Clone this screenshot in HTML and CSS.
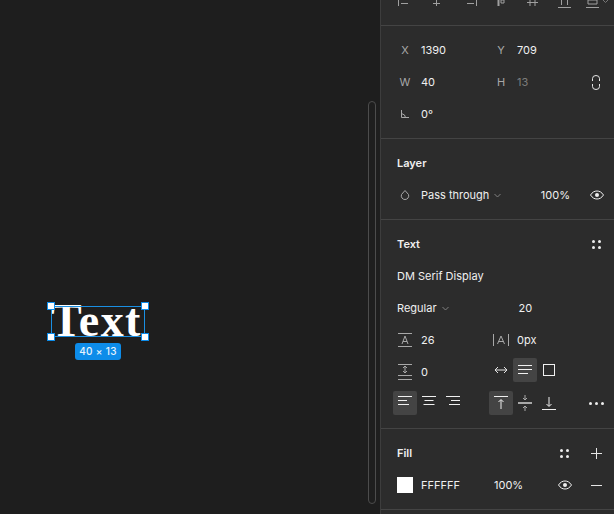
FILE: index.html
```html
<!DOCTYPE html>
<html lang="en">
<head>
    <meta charset="UTF-8">
    <title>Text properties</title>
    <link rel="stylesheet" href="styles.css">
</head>
<body>

<div class="app">
    <div class="canvas">
        <div class="layer-text">Text</div>
        <div class="selection">
            <span class="handle tl"></span>
            <span class="handle tr"></span>
            <span class="handle bl"></span>
            <span class="handle br"></span>
        </div>
        <div class="size-badge">40 × 13</div>
        <div class="scrollbar"></div>
    </div>

    <div class="panel">
        <!-- align buttons, cut off by the top of the window -->
        <div class="section align-section">
            <svg width="233" height="25" viewBox="0 0 233 25" fill="none" stroke="#a0a0a0">
                <path d="M17.5 0v6M20 3.5h7"/>
                <path d="M55.5 0v6M52 3.500h7"/>
                <path d="M95.5 0v6M86 3.500h7"/>
                <path d="M117.5 0v6" stroke-width="2"/>
                <path d="M120 0h3v3h-3z"/>
                <path d="M146 2.500h11M149 0v6M154 0v6"/>
                <path d="M177 7.500h13M180.500 0v5M186.500 0v5"/>
                <path d="M205 7.500h13M207 0h9v4h-9z"/>
                <path d="M222 0l2.500 2.500L227 0" stroke="#777"/>
            </svg>
        </div>

        <div class="section xy-section">
            <div class="row">
                <span class="label">X</span><span class="value">1390</span>
                <span class="label">Y</span><span class="value">709</span>
            </div>
            <div class="row">
                <span class="label">W</span><span class="value">40</span>
                <span class="label">H</span><span class="value dim">13</span>
                <svg class="constrain" width="8" height="15" viewBox="0 0 8 15" fill="none" stroke="#e6e6e6">
                    <path d="M.5 6V3.500a3.500 3 0 0 1 7 0V6M.5 9v2.500a3.500 3 0 0 0 7 0V9"/>
                </svg>
            </div>
            <div class="row">
                <span class="label">
                    <svg width="10" height="10" viewBox="0 0 10 10" fill="none" stroke="#a8a8a8">
                        <path d="M1.500 1v7.500H9M1.500 4.500l3 1.500 1 2.500"/>
                    </svg>
                </span>
                <span class="value">0°</span>
            </div>
        </div>

        <div class="section layer-section">
            <div class="heading">Layer</div>
            <div class="row">
                <span class="label">
                    <svg width="10" height="12" viewBox="0 0 10 12" fill="none" stroke="#a8a8a8">
                        <path d="M5 1.500L8.500 5.500a3.700 3.700 0 0 1-3.500 5a3.700 3.700 0 0 1-3.500-5z"/>
                    </svg>
                </span>
                <span class="blend">Pass through</span>
                <svg class="chevron" width="7" height="5" viewBox="0 0 7 5" fill="none" stroke="#808080"><path d="M.5 1L3.500 4L6.500 1"/></svg>
                <span class="percent">100%</span>
                <svg class="eye" width="14" height="10" viewBox="0 0 14 10" fill="none" stroke="#eee"><path d="M.5 5C2.500 2 4.500 1 7 1s4.500 1 6.500 4C11.500 8 9.500 9 7 9S2.500 8 .5 5z"/><circle cx="7" cy="5" r="2" fill="#eee" stroke="none"/></svg>
            </div>
        </div>

        <div class="section text-section">
            <div class="heading">
                Text
                <span class="dots"><i></i><i></i><i></i><i></i></span>
            </div>
            <div class="row">DM Serif Display</div>
            <div class="row">
                <span>Regular</span>
                <svg class="chevron" width="7" height="5" viewBox="0 0 7 5" fill="none" stroke="#808080"><path d="M.5 1L3.500 4L6.500 1"/></svg>
                <span class="font-size">20</span>
            </div>
            <div class="row">
                <span class="label">
                    <svg width="15" height="14" viewBox="0 0 15 14" fill="none" stroke="#a8a8a8">
                        <path d="M0 .5h14M0 13.500h14M4 11l3-8 3 8M5 8.500h4"/>
                    </svg>
                </span>
                <span class="value">26</span>
                <span class="label">
                    <svg width="16" height="12" viewBox="0 0 16 12" fill="none" stroke="#a8a8a8">
                        <path d="M.5 0v12M15.500 0v12M4.500 10l3.500-8 3.500 8M5.500 7.500h5"/>
                    </svg>
                </span>
                <span class="value">0px</span>
            </div>
            <div class="row">
                <span class="label">
                    <svg width="15" height="16" viewBox="0 0 15 16" fill="none" stroke="#a8a8a8">
                        <path d="M0 .5h14M0 11.500h14M0 15.500h14M7 2v7M5 4l2-2 2 2M5 7l2 2 2-2"/>
                    </svg>
                </span>
                <span class="value">0</span>
                <span class="resize-opts">
                    <svg width="14" height="8" viewBox="0 0 14 8" fill="none" stroke="#e6e6e6"><path d="M1 4h12M4 1L1 4l3 3M10 1l3 3-3 3"/></svg>
                    <span class="tool active">
                        <svg width="14" height="10" viewBox="0 0 14 10" fill="none" stroke="#f0f0f0"><path d="M0 .5h14M0 4.500h14M0 8.500h10"/></svg>
                    </span>
                    <span class="square"></span>
                </span>
            </div>
            <div class="row tools-row">
                <span class="tool active raised">
                    <svg width="14" height="10" viewBox="0 0 14 10" fill="none" stroke="#f0f0f0"><path d="M0 .5h14M0 4.500h9M0 8.500h11"/></svg>
                </span>
                <span class="tool raised">
                    <svg width="14" height="10" viewBox="0 0 14 10" fill="none" stroke="#f0f0f0"><path d="M0 .5h14M2.500 4.500h9M1.500 8.500h11"/></svg>
                </span>
                <span class="tool raised">
                    <svg width="14" height="10" viewBox="0 0 14 10" fill="none" stroke="#f0f0f0"><path d="M0 .5h14M5 4.500h9M3 8.500h11"/></svg>
                </span>
                <span class="tool active gap-left">
                    <svg width="14" height="14" viewBox="0 0 14 14" fill="none" stroke="#f0f0f0"><path d="M0 .5h14M7 13V4M4.500 6L7 3.500 9.500 6"/></svg>
                </span>
                <span class="tool">
                    <svg width="14" height="16" viewBox="0 0 14 16" fill="none" stroke="#a8a8a8"><path d="M0 8h14" stroke-width="2"/><path d="M7 0v5M5 3l2 2 2-2M7 16v-5M5 13l2-2 2 2"/></svg>
                </span>
                <span class="tool">
                    <svg width="14" height="14" viewBox="0 0 14 14" fill="none" stroke="#f0f0f0"><path d="M0 13.500h14M7 1v9M4.500 8L7 10.500 9.500 8"/></svg>
                </span>
                <span class="more"><i></i><i></i><i></i></span>
            </div>
        </div>

        <div class="section fill-section">
            <div class="heading">
                Fill
                <span class="dots"><i></i><i></i><i></i><i></i></span>
                <svg class="plus" width="11" height="11" viewBox="0 0 11 11" stroke="#e6e6e6"><path d="M5.500 0v11M0 5.500h11"/></svg>
            </div>
            <div class="row">
                <span class="swatch"></span>
                <span class="hex">FFFFFF</span>
                <span class="fill-percent">100%</span>
                <svg class="eye" width="14" height="10" viewBox="0 0 14 10" fill="none" stroke="#eee"><path d="M.5 5C2.500 2 4.500 1 7 1s4.500 1 6.500 4C11.500 8 9.500 9 7 9S2.500 8 .5 5z"/><circle cx="7" cy="5" r="2" fill="#eee" stroke="none"/></svg>
                <svg class="minus" width="11" height="1" viewBox="0 0 11 1" stroke="#e6e6e6"><path d="M0 .5h11"/></svg>
            </div>
        </div>
    </div>
</div>

</body>
</html>
```

FILE: styles.css
```css
* {
    margin: 0;
    padding: 0;
    box-sizing: border-box;
}

html, body {
    height: 100%;
    overflow: hidden;
}

body {
    background: #1e1e1e;
    color: #f0f0f0;
    font-family: Inter, 'Liberation Sans', sans-serif;
    font-size: 11px;
}

.app {
    display: flex;
    width: 614px;
    height: 514px;
}

/* Canvas: things here sit at free positions */
.canvas {
    position: relative;
    width: 380px;
    flex-shrink: 0;
}

.layer-text {
    position: absolute;
    left: 51px;
    top: 294px;
    font-family: 'Liberation Serif', serif;
    font-weight: bold;
    font-size: 46px;
    line-height: 54px;
    letter-spacing: 1.4px;
    color: #fff;
}

.selection {
    position: absolute;
    left: 51px;
    top: 306px;
    width: 94px;
    height: 31px;
    border: 1px solid #1a8fe3;
}

.handle {
    position: absolute;
    width: 8px;
    height: 8px;
    background: #fff;
    border: 1px solid #0d8ce9;
}

.handle.tl { left: -5px; top: -5px; }
.handle.tr { right: -5px; top: -5px; }
.handle.bl { left: -5px; bottom: -5px; }
.handle.br { right: -5px; bottom: -5px; }

.size-badge {
    position: absolute;
    left: 75px;
    top: 343px;
    width: 46px;
    height: 17px;
    line-height: 17px;
    text-align: center;
    background: #0d8ce9;
    color: #e8f4fd;
    border-radius: 3px;
    font-size: 10px;
    font-weight: 500;
    letter-spacing: 0.3px;
}

.scrollbar {
    position: absolute;
    left: 368px;
    top: 101px;
    width: 8px;
    height: 403px;
    border: 1px solid #4c4c4c;
    border-radius: 4px;
}

/* Right panel */
.panel {
    width: 234px;
    height: 514px;
    background: #2c2c2c;
    border-left: 1px solid #3d3d3d;
    overflow: hidden;
}

.section {
    border-bottom: 1px solid #444;
    padding: 0 16px;
}

.align-section {
    height: 26px;
    padding: 0;
}

.align-section svg {
    display: block;
}

.xy-section {
    height: 113px;
    padding-top: 8px;
}

.layer-section {
    height: 81px;
}

.text-section {
    height: 209px;
}

.fill-section {
    height: 81px;
}

.heading {
    display: flex;
    align-items: center;
    height: 40px;
    padding-top: 8px;
    font-weight: 600;
}

.row {
    display: flex;
    align-items: center;
    height: 32px;
}

.label {
    display: flex;
    justify-content: center;
    align-items: center;
    width: 24px;
    margin-left: -4px;
    margin-right: 4px;
    color: #a8a8a8;
    flex-shrink: 0;
}

.value {
    width: 64px;
}

.row .value + .label {
    width: 32px;
    margin: 0;
}

.dim {
    color: #7d7d7d;
}

.constrain {
    margin-left: auto;
    margin-right: -2px;
}

.eye {
    flex-shrink: 0;
}

/* Layer */
.chevron {
    margin-left: 5px;
}

.percent {
    margin-left: auto;
    margin-right: 20px;
}

.layer-section .eye {
    margin-right: -6px;
}

.dots {
    display: grid;
    grid-template-columns: 3px 3px;
    gap: 3px;
    margin-left: auto;
    margin-right: -3px;
}

.dots i {
    width: 3px;
    height: 3px;
    border-radius: 50%;
    background: #eee;
}

/* Text */
.font-size {
    margin-left: 70px;
}

.resize-opts {
    display: flex;
    align-items: center;
    margin-left: 9px;
    margin-bottom: 4px;
}

.tool {
    display: flex;
    align-items: center;
    justify-content: center;
    width: 24px;
    height: 24px;
    margin-bottom: 2px;
    border-radius: 2px;
}

.tool.active {
    background: #444;
}

.raised svg {
    margin-bottom: 4px;
}

.resize-opts .tool {
    margin-left: 5px;
    margin-bottom: 0;
}

.square {
    width: 12px;
    height: 12px;
    border: 1px solid #f0f0f0;
    margin-left: 6px;
}

.tools-row {
    margin-left: -4px;
}

.gap-left {
    margin-left: 24px;
}

.more {
    display: flex;
    gap: 3px;
    margin-left: auto;
    margin-right: -6px;
    margin-bottom: 2px;
}

.more i {
    width: 3px;
    height: 3px;
    border-radius: 50%;
    background: #eee;
}

/* Fill */
.fill-section .dots {
    margin-right: 22px;
}

.plus {
    margin-right: -4px;
}

.swatch {
    width: 16px;
    height: 16px;
    background: #fff;
    flex-shrink: 0;
}

.hex {
    margin-left: 8px;
    width: 73px;
}

.fill-percent {
    width: 64px;
}

.minus {
    margin-left: auto;
    margin-right: -4px;
}
```
